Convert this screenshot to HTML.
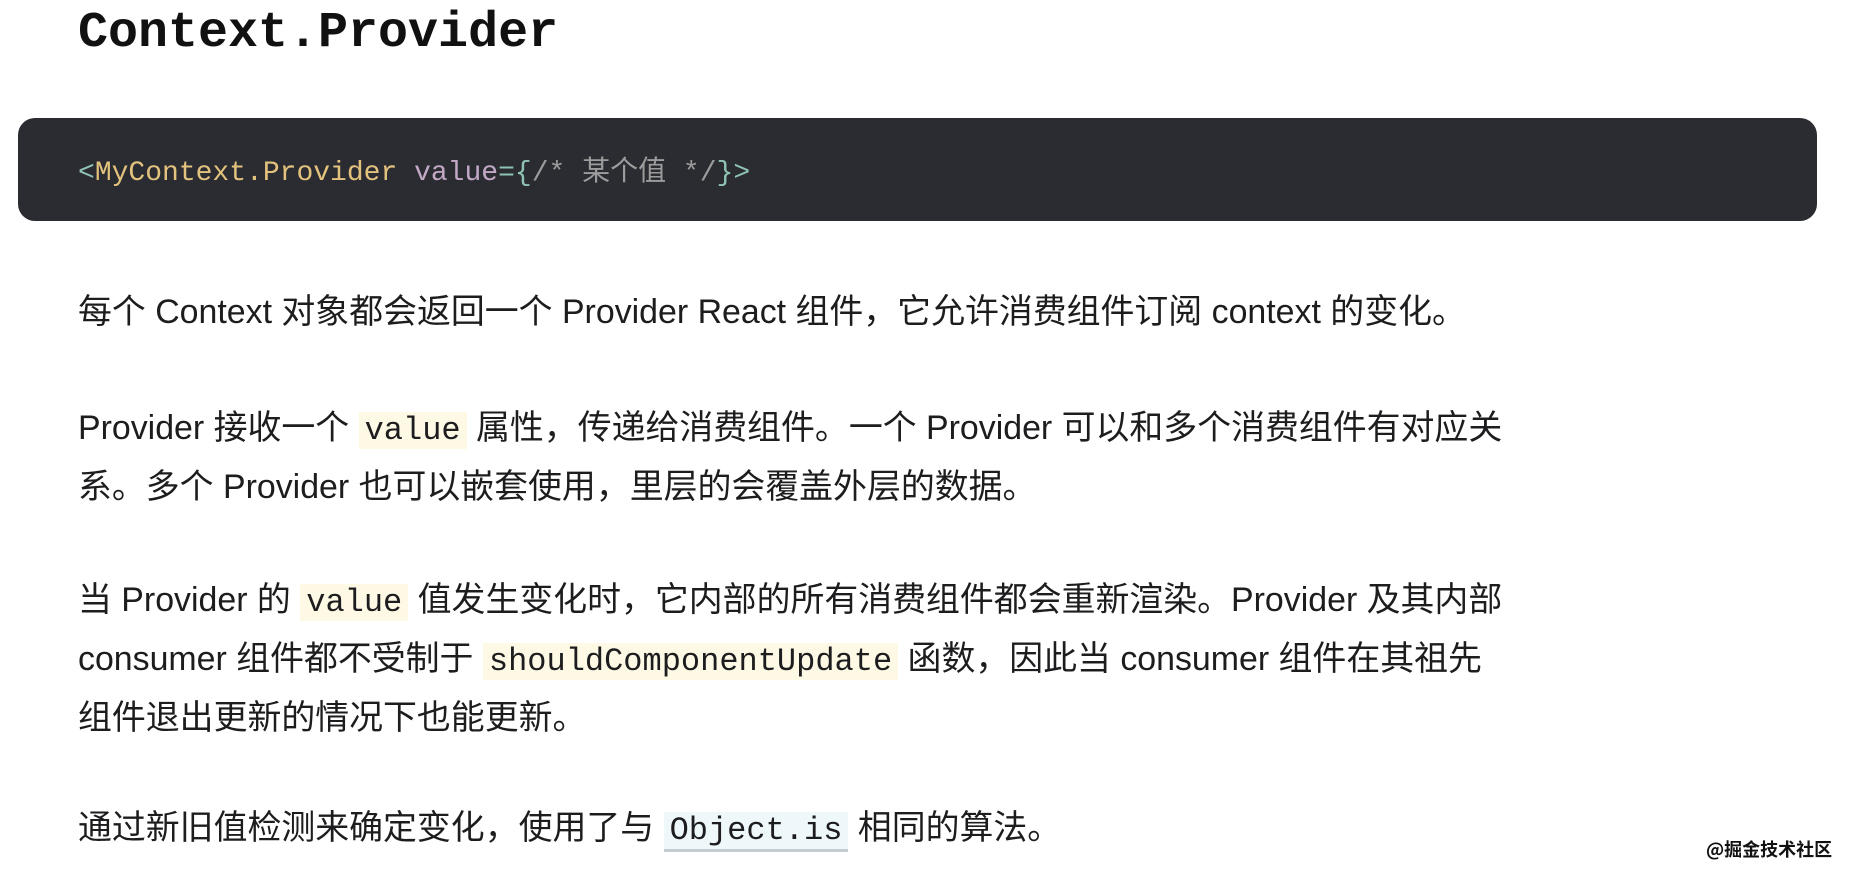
<!DOCTYPE html>
<html><head><meta charset="utf-8"><style>
html,body{margin:0;padding:0;background:#fff;width:1856px;height:872px;overflow:hidden;position:relative}
body{font-family:"Liberation Sans","Noto Sans CJK SC",sans-serif;color:#1d1d1f}
h1{position:absolute;left:78px;top:2px;margin:0;font-family:"Liberation Mono","DejaVu Sans Mono",monospace;font-weight:bold;font-size:50px;line-height:64px;color:#111}
.pre{position:absolute;left:18px;top:118px;width:1799px;height:103px;background:#2b2c31;border-radius:17px}
.pre code{position:absolute;left:60px;top:38px;font-family:"Liberation Mono","Noto Sans CJK SC",monospace;font-size:28px;line-height:36px;white-space:pre}
.t{color:#8fc4b4}.y{color:#e3c27e}.p{color:#c2a8c6}.c{color:#9c9c9c}
p{position:absolute;left:78px;margin:0;font-size:33.9px;line-height:56px;width:1500px;white-space:nowrap}
.ic{font-family:"Liberation Mono","DejaVu Sans Mono",monospace;background:#fdf9e4;padding:0 6px;font-size:32px}
.ib{font-family:"Liberation Mono","DejaVu Sans Mono",monospace;background:#eef7f9;padding:0 6px;border-bottom:3px solid #c3cdd2;font-size:32px}
.wm{position:absolute;left:1706px;top:836px;font-size:18px;color:#111;font-weight:bold;font-family:"Noto Sans CJK SC",sans-serif;line-height:26px}
</style></head><body>
<h1>Context.Provider</h1>
<div class="pre"><code><span class="t">&lt;</span><span class="y">MyContext.Provider</span> <span class="p">value</span><span class="t">={</span><span class="c">/* 某个值 */</span><span class="t">}&gt;</span></code></div>
<p style="top:284px">每个 Context 对象都会返回一个 Provider React 组件，它允许消费组件订阅 context 的变化。</p>
<p style="top:400px">Provider 接收一个 <span class="ic">value</span> 属性，传递给消费组件。一个 Provider 可以和多个消费组件有对应关<br>系。多个 Provider 也可以嵌套使用，里层的会覆盖外层的数据。</p>
<p style="top:572px">当 Provider 的 <span class="ic">value</span> 值发生变化时，它内部的所有消费组件都会重新渲染。Provider 及其内部<br>consumer 组件都不受制于 <span class="ic">shouldComponentUpdate</span> 函数，因此当 consumer 组件在其祖先<br>组件退出更新的情况下也能更新。</p>
<p style="top:800px">通过新旧值检测来确定变化，使用了与 <span class="ib">Object.is</span> 相同的算法。</p>
<div class="wm">@掘金技术社区</div>
</body></html>
